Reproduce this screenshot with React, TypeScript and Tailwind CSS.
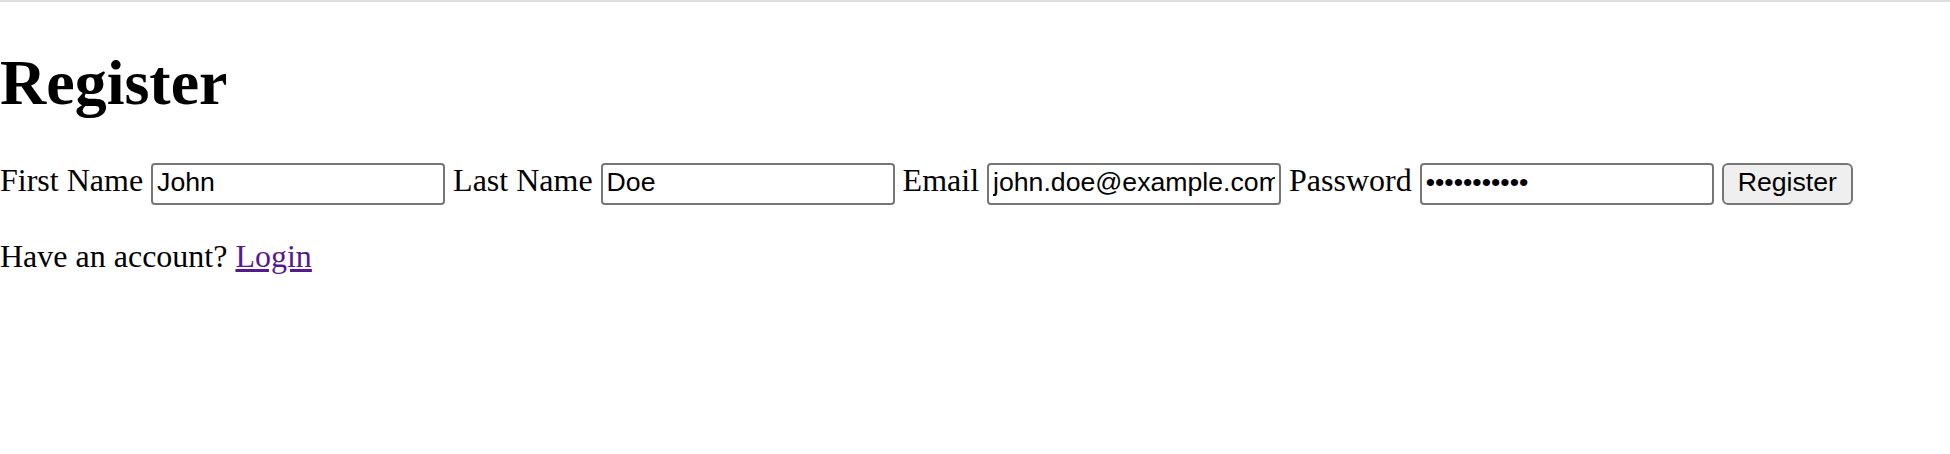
import React from "react";

export default function App() {
  const inputCls =
    "inline-block align-baseline w-[294px] h-[42px] px-[4px] pt-[0.5px] pb-[3.5px] border-2 border-[#767676] rounded-[4px] bg-white text-black text-[26.67px] leading-[normal] [font-family:'Liberation_Sans',Arial,sans-serif] outline-none";
  return (
    <div className="relative flow-root h-[454px] overflow-hidden bg-white text-black [font-family:'Liberation_Serif','Times_New_Roman',serif]">
      <div className="absolute left-0 top-0 w-full h-[2px] bg-[#dedede]" />
      <h1 className="text-[64px] font-bold leading-[normal] mt-[45.6px] mb-[42.88px]">Register</h1>
      <form className="text-[32px] leading-[normal]" onSubmit={(e) => e.preventDefault()}>
        <label>First Name</label>{" "}
        <input className={inputCls} type="text" defaultValue="John" />{" "}
        <label>Last Name</label>{" "}
        <input className={inputCls} type="text" defaultValue="Doe" />{" "}
        <label>Email</label>{" "}
        <input className={inputCls} type="email" defaultValue="john.doe@example.com" />{" "}
        <label>Password</label>{" "}
        <input className={inputCls} type="password" defaultValue="password123" />{" "}
        <button
          type="submit"
          className="inline-block align-baseline h-[42px] px-[14px] pt-[0.5px] pb-[3.5px] border-2 border-[#767676] rounded-[6px] bg-[#efefef] text-black text-[26.67px] leading-[normal] [font-family:'Liberation_Sans',Arial,sans-serif]"
        >
          Register
        </button>
      </form>
      <p className="text-[32px] leading-[normal] mt-[33px] mb-[32px]">
        Have an account?{" "}
        <a href="#" className="text-[#551a8b] underline">
          Login
        </a>
      </p>
    </div>
  );
}
